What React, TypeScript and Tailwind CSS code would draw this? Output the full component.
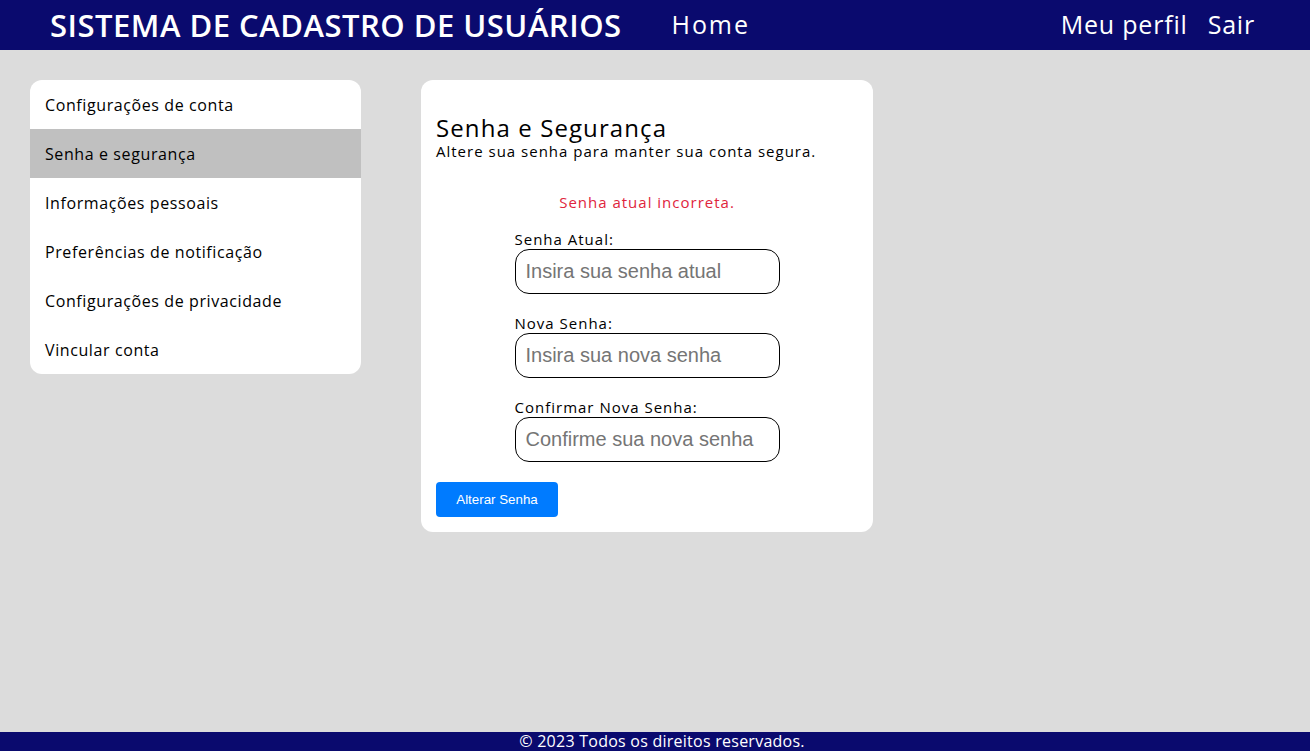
const MENU = [
  'Configurações de conta',
  'Senha e segurança',
  'Informações pessoais',
  'Preferências de notificação',
  'Configurações de privacidade',
  'Vincular conta',
];

const FIELDS = [
  { label: 'Senha Atual:', placeholder: 'Insira sua senha atual' },
  { label: 'Nova Senha:', placeholder: 'Insira sua nova senha' },
  { label: 'Confirmar Nova Senha:', placeholder: 'Confirme sua nova senha' },
];

export default function App() {
  return (
    <div className="flex min-h-screen flex-col bg-[#dcdcdc] font-['Open_Sans',sans-serif] text-black">
      {/* topo */}
      <header className="flex h-[50px] items-center bg-[#0a0a6e] pr-[55px] pl-[50px] text-white">
        <h1 className="text-[31px] font-semibold tracking-[0.5px]">SISTEMA DE CADASTRO DE USUÁRIOS</h1>
        <a className="ml-[50px] text-[25px] tracking-[1.9px]">Home</a>
        <nav className="ml-auto flex gap-[20px] text-[25px] tracking-[0.8px]">
          <a>Meu perfil</a>
          <a>Sair</a>
        </nav>
      </header>

      <main className="flex flex-1 items-start gap-[60px] px-[30px] pt-[30px]">
        {/* menu lateral */}
        <aside className="w-[331px] overflow-hidden rounded-[12px] bg-white">
          {MENU.map((item, i) => (
            <div
              key={item}
              className={`flex h-[49px] items-center px-[15px] text-[16px] font-medium tracking-[0.6px] ${i === 1 ? 'bg-[#c0c0c0]' : ''}`}>
              {item}
            </div>
          ))}
        </aside>

        {/* cartão */}
        <section className="w-[452px] rounded-[12px] bg-white px-[15px] pt-[33px] pb-[15px]">
          <h2 className="text-[24px] leading-[29px] font-medium tracking-[1.1px]">Senha e Segurança</h2>
          <p className="text-[15px] leading-[18px] tracking-[1px]">Altere sua senha para manter sua conta segura.</p>

          <p className="mt-[33px] text-center text-[15px] leading-[18px] tracking-[1px] text-[#e0243c]">
            Senha atual incorreta.
          </p>

          <div className="mt-[19px] flex flex-col items-center">
            {FIELDS.map((f) => (
              <div key={f.label} className="mb-[20px] w-[265px]">
                <label className="block text-[15px] leading-[19px] tracking-[1px]">{f.label}</label>
                <input
                  type="password"
                  placeholder={f.placeholder}
                  className="h-[45px] w-full rounded-[14px] border border-black px-[10px] font-['Liberation_Sans',sans-serif] text-[20px] placeholder:text-[#757575]"
                />
              </div>
            ))}
          </div>

          <button className="h-[35px] w-[122px] rounded-[4px] bg-[#007bff] font-['Liberation_Sans',sans-serif] text-[13.33px] text-white">
            Alterar Senha
          </button>
        </section>
      </main>

      <footer className="bg-[#0a0a6e] pl-[14px] text-center text-[16px] leading-[19px] tracking-[0.25px] text-white">
        © 2023 Todos os direitos reservados.
      </footer>
    </div>
  );
}
